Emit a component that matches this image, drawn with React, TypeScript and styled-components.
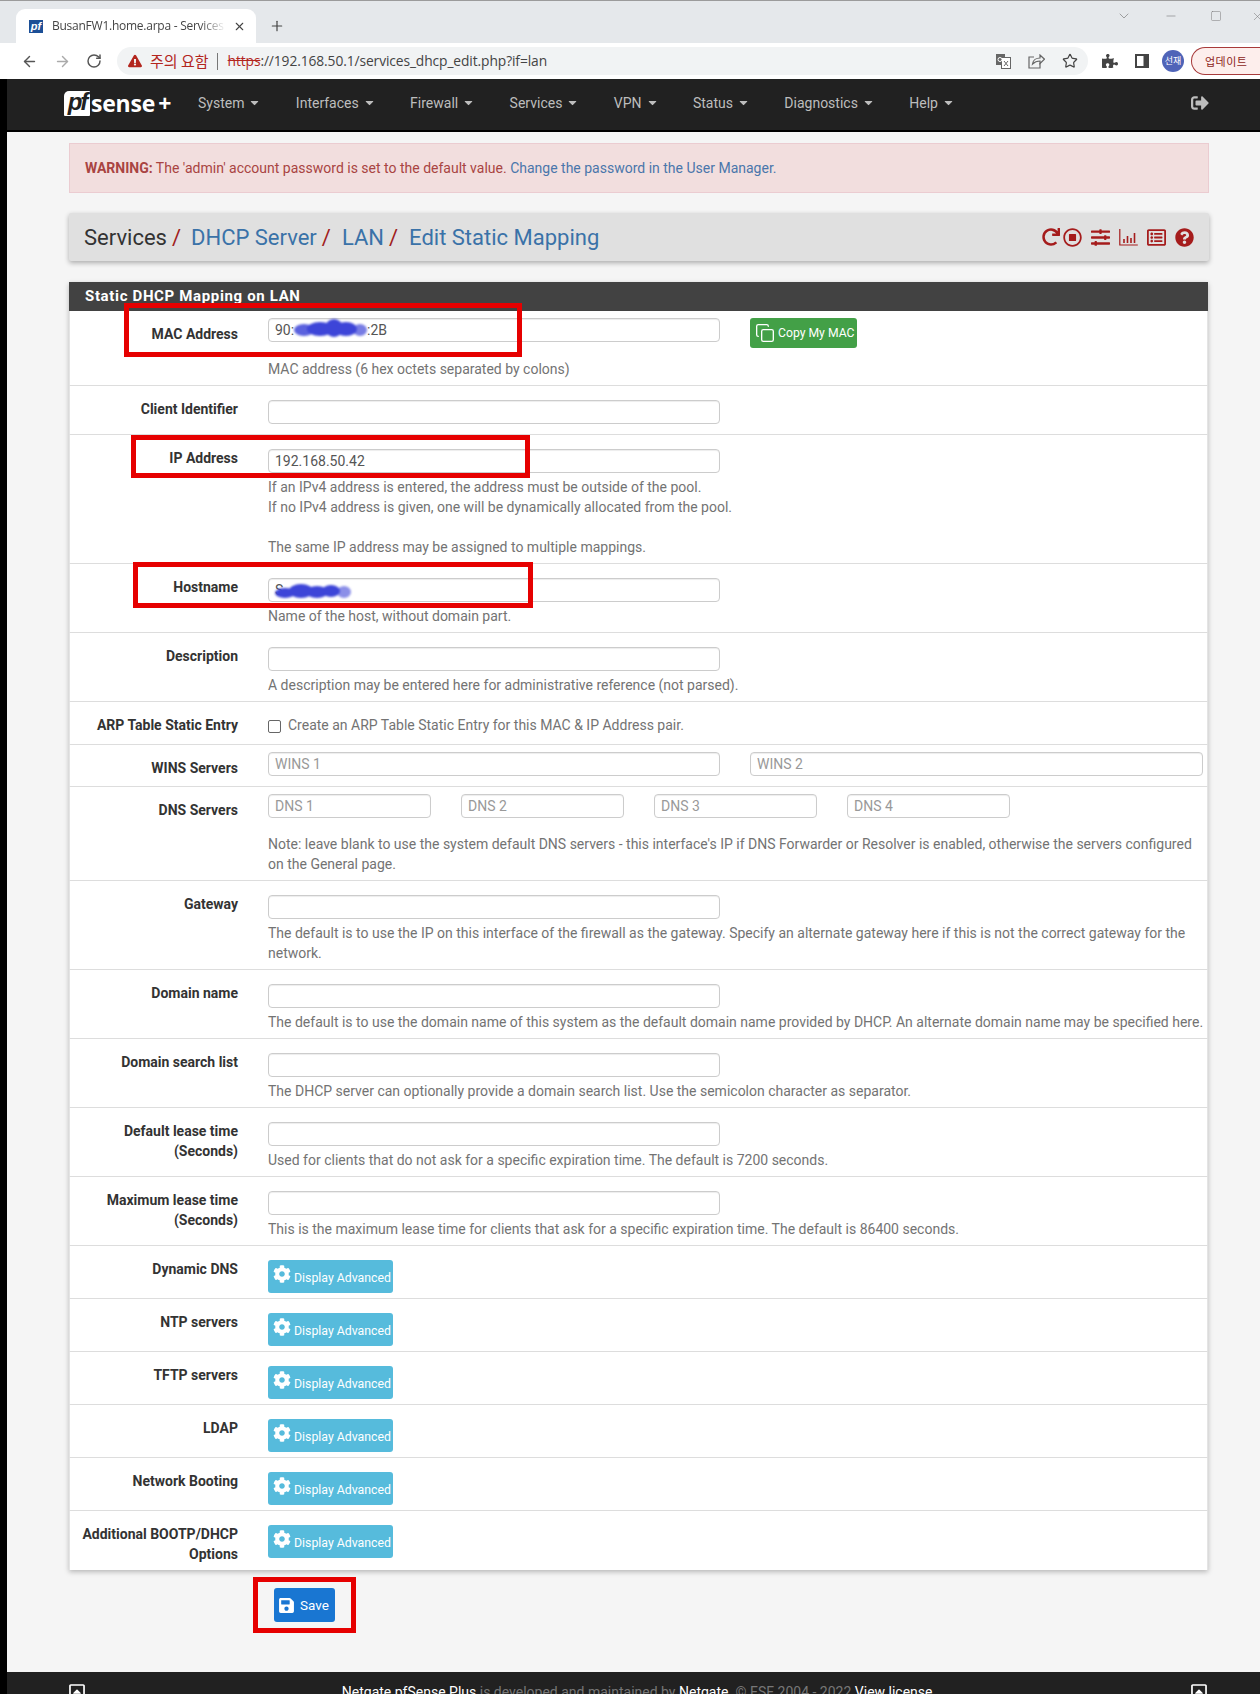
import React from "react";
import styled, { createGlobalStyle } from "styled-components";
import { ArrowLeft, ArrowRight, RotateCw, X, Plus, Star, ChevronDown, Minus, Square, Copy } from "lucide-react";
import {
  FaCaretDown, FaCog, FaExclamationTriangle, FaPuzzlePiece, FaQuestionCircle, FaRedo, FaRegCaretSquareUp,
  FaRegListAlt, FaRegStopCircle, FaSave, FaSignOutAlt, FaSlidersH,
} from "react-icons/fa";

const Global = createGlobalStyle`
  html, body { margin: 0; padding: 0; width: 1260px; height: 1694px; overflow: hidden; background: #f5f5f5; }
  body { font-family: Roboto, "Noto Sans CJK KR", sans-serif; font-size: 14px; line-height: 20px; color: #333; }
  * { box-sizing: border-box; }
`;

const Screen = styled.div`position: relative; display: flex; width: 1260px; height: 1694px; overflow: hidden; background: #f5f5f5;`;
const BlackEdge = styled.div`width: 7px; flex: none; margin-top: 1px; background: #000;`;
const Content = styled.div`flex: 1; min-width: 0; display: flex; flex-direction: column;`;

/* browser chrome */
const TabStrip = styled.div`height: 43px; margin-left: -7px; padding-left: 16px; display: flex; align-items: flex-end; background: #e5e8eb; border-top: 1px solid #9b9b9b; position: relative;`;
const Tab = styled.div`width: 240px; height: 34px; border-radius: 9px 9px 0 0; background: #fff; display: flex; align-items: center; padding-left: 13px; color: #444; font-size: 12px;`;
const Favicon = styled.div`width: 14px; height: 13px; background: #1c4f96; color: #fff; font: italic 700 11px/13px "Liberation Sans", sans-serif; text-align: center; flex: none; margin-right: 9px;`;
const TabTitle = styled.div`width: 174px; white-space: nowrap; font-family: "Open Sans", sans-serif; font-size: 12px; letter-spacing: -0.25px; -webkit-mask-image: linear-gradient(90deg, #000 85%, transparent); mask-image: linear-gradient(90deg, #000 85%, transparent);`;
const TabClose = styled.div`display: flex; margin-left: 7px; color: #444;`;
const NewTab = styled.div`display: flex; margin-left: 13px; padding-bottom: 9px; color: #444;`;
const WindowControls = styled.div`position: absolute; right: -5px; top: 0; height: 30px; display: flex; align-items: center; color: #777;`;
const WinBtn = styled.span<{ $gap: number }>`display: flex; justify-content: center; width: 16px; margin-left: ${(p) => p.$gap}px;`;
const Toolbar = styled.div`height: 36px; margin-left: -7px; background: #fff; display: flex; align-items: center; padding-left: 21px;`;
const NavBtn = styled.span<{ $gap: number; $c?: string }>`display: flex; margin-right: ${(p) => p.$gap}px; color: ${(p) => p.$c || "#555"};`;
const UrlPill = styled.div`width: 971px; height: 28px; border-radius: 14px; background: #f1f3f4; display: flex; align-items: center; padding-left: 11px; flex: none;`;
const Insecure = styled.span`margin-left: 8px; color: #b3261e; font: 15px/20px "Noto Sans CJK KR", sans-serif; white-space: nowrap;`;
const UrlSep = styled.span`width: 1px; height: 17px; background: #777; margin: 0 10px 0 8px;`;
const UrlText = styled.span`font-family: "Open Sans", sans-serif; font-size: 13.8px; letter-spacing: -0.1px; color: #444;`;
const Https = styled.span`color: #b3261e; text-decoration: line-through;`;
const PillIcons = styled.div`margin-left: auto; display: flex; align-items: center; gap: 17px; padding-right: 10px; color: #555;`;
const ToolIcons = styled.div`display: flex; align-items: center; margin-left: 14px; gap: 17px; color: #444;`;
const Avatar = styled.div`width: 22px; height: 22px; border-radius: 50%; background: #4f64b8; color: #fff; font: 9px/22px "Noto Sans CJK KR", sans-serif; text-align: center; margin-left: -4px;`;
const UpdatePill = styled.div`width: 90px; height: 28px; flex: none; margin-left: 7px; border: 1px solid #a83a3a; border-right: none; border-radius: 14px 0 0 14px; background: #fdeeec; color: #8c1d18; font: 11px/26px "Noto Sans CJK KR", sans-serif; padding-left: 13px; letter-spacing: 0.5px;`;

/* navbar */
const Navbar = styled.nav`height: 53px; background: #212121; border-bottom: 2px solid #000; display: flex; align-items: center; padding: 0 51px 4px 57px; flex: none;`;
const Logo = styled.div`display: flex; align-items: center; width: 134px; flex: none; padding-top: 1px;`;
const LogoBox = styled.span`width: 26px; height: 25px; background: #fff; border-radius: 5px 1px 1px 1px; color: #212121; font: italic 700 24px/22px "Liberation Sans", sans-serif; text-align: center; letter-spacing: -2px; flex: none;`;
const LogoWord = styled.span`color: #fff; font: 700 23px/25px "Open Sans", sans-serif; letter-spacing: -0.2px; margin-left: 1px;`;
const LogoPlus = styled.span`color: #fff; font: 700 23px/25px "Open Sans", sans-serif; margin-left: 3px;`;
const NavItem = styled.span`display: flex; align-items: center; color: #bdbdbd; font-size: 14px; margin-right: 34.4px; white-space: nowrap;`;
const Caret = styled.span`display: flex; margin-left: 4px; color: #bdbdbd;`;
const Logout = styled.span`margin-left: auto; display: flex; color: #bdbdbd;`;

/* page */
const Main = styled.main`flex: 1; padding: 11px 51px 0 62px; display: flex; flex-direction: column; min-height: 0;`;
const Alert = styled.div`height: 50px; border: 1px solid #ebccd1; background: #f2dede; color: #a94442; padding: 14px 15px; font-size: 14px;`;
const AlertLink = styled.a`color: #4a76ab;`;
const PageHead = styled.div`height: 48px; margin-top: 20px; background: #e0e0e0; border-radius: 2px; box-shadow: 0 2px 5px rgba(0,0,0,.3); display: flex; align-items: center; padding: 0 15px;`;
const Crumbs = styled.div`display: flex; font-size: 22px; line-height: 30px; color: #333; padding-top: 2px;`;
const Crumb = styled.span`margin-right: 5px; white-space: nowrap;`;
const CrumbLink = styled.a<{ $first?: boolean }>`color: #3a72a8; margin: 0 5px 0 ${(p) => (p.$first ? 10 : 11)}px; white-space: nowrap;`;
const Slash = styled.span`color: #a02020;`;
const HeadIcons = styled.div`margin-left: auto; display: flex; align-items: center; color: #a51c1c;`;
const HeadIcon = styled.span<{ $gap: number }>`display: flex; margin-left: ${(p) => p.$gap}px;`;

const Panel = styled.section`margin-top: 21px; margin-right: 1px; background: #fff; box-shadow: 0 2px 5px rgba(0,0,0,.25); flex: none;`;
const PanelHead = styled.h2`margin: 0; height: 29px; background: #424242; color: #fff; font-size: 15px; font-weight: 700; line-height: 29px; padding-left: 16px; letter-spacing: 0.65px;`;
const Row = styled.div<{ $last?: boolean }>`display: flex; border-left: 1px solid #e4e4e4; border-right: 1px solid #e4e4e4; ${(p) => (p.$last ? "" : "border-bottom: 1px solid #ddd;")}`;
const Label = styled.label`width: 168px; flex: none; text-align: right; font-weight: 700; color: #333; padding-top: 13px; padding-left: 6px; font-size: 14px;`;
const Control = styled.div<{ $top?: number; $bottom?: number }>`flex: 1; min-width: 0; margin-left: 30px; padding-top: ${(p) => p.$top ?? 14}px; padding-bottom: ${(p) => p.$bottom ?? 6}px; position: relative;`;
const Line = styled.div<{ $gap: number }>`display: flex; gap: ${(p) => p.$gap}px; align-items: flex-start;`;
const TextInput = styled.input<{ $w?: number }>`
  display: block; width: ${(p) => p.$w ?? 452}px; flex: none; height: 24px; padding: 0 6px; border: 1px solid #ccc; border-radius: 4px; background: #fff;
  box-shadow: inset 0 1px 1px rgba(0,0,0,.075); font: 14px Roboto, sans-serif; color: #555; outline: none;
  &::placeholder { color: #999; opacity: 1; }
`;
const Help = styled.div<{ $gap?: number }>`margin-top: ${(p) => p.$gap ?? 4}px; color: #737373; font-size: 14px; line-height: 20px; width: 937px;`;
const Smear = styled.svg<{ $x: number; $y: number }>`position: absolute; left: ${(p) => p.$x}px; top: ${(p) => p.$y}px; overflow: visible; filter: blur(1px);`;
const CopyBtn = styled.button`height: 30px; width: 107px; display: flex; align-items: center; padding: 0 0 0 5px; border: 0; border-radius: 3px; background: #43a047; color: #fff; font: 12.2px Roboto, sans-serif; gap: 3px;`;
const CheckLine = styled.div`display: flex; align-items: center; height: 20px; color: #737373;`;
const Check = styled.input`appearance: none; width: 13px; height: 13px; margin: 2px 7px 0 0; border: 1px solid #666; border-radius: 2px; background: #fff;`;
const AdvBtn = styled.button`height: 33px; width: 125px; display: flex; align-items: center; padding: 0 0 0 5px; gap: 3px; border: 0; border-radius: 3px; background: #56bbdc; color: #fff; font: 12.3px Roboto, sans-serif;`;
const AdvIcon = styled.span`display: flex; margin-top: -5px;`;
const AdvText = styled.span`margin-top: 3px;`;
const SaveRow = styled.div`margin-top: 18px; padding-left: 205px; flex: none;`;
const SaveBtn = styled.button`height: 34px; width: 61px; display: flex; align-items: center; gap: 5px; padding: 0 0 0 4px; border: 0; border-radius: 3px; background: #1976d2; color: #fff; font: 13.5px Roboto, sans-serif;`;

/* footer */
const Footer = styled.footer`position: absolute; left: 7px; right: 0; top: 1672px; height: 40px; background: #212121; color: #777; display: flex; padding: 10px 52px 0 61px;`;
const FootIcon = styled.span`display: flex; color: #fff; margin-top: 1px;`;
const FootText = styled.div`flex: 1; text-align: center; font-size: 14px; padding-left: 2px;`;
const FootLink = styled.span`color: #fff;`;

/* annotations laid over the shot */
const RedBox = styled.div<{ $x: number; $y: number; $w: number; $h: number }>`
  position: absolute; left: ${(p) => p.$x}px; top: ${(p) => p.$y}px; width: ${(p) => p.$w}px; height: ${(p) => p.$h}px;
  border: 5px solid #e60000; pointer-events: none;
`;

const BarChart = () => (
  <svg width="19" height="17" viewBox="0 0 19 17" fill="none" stroke="currentColor" strokeWidth="1.2">
    <path d="M.8 0v16h18" />
    <path d="M5 14v-4M8.5 14V7M12 14V9M15.5 14V4" strokeWidth="1.6" />
  </svg>
);
const Translate = () => (
  <svg width="15" height="15" viewBox="0 0 15 15">
    <rect x="0" y="0" width="9" height="11" fill="#666" />
    <rect x="5.5" y="3.5" width="9" height="11" fill="#fff" stroke="#666" />
    <circle cx="4" cy="5.5" r="2" fill="none" stroke="#fff" />
    <path d="M8 7l4 5M12 7l-4 5" stroke="#666" />
  </svg>
);
const ShareIcon = () => (
  <svg width="17" height="15" viewBox="0 0 17 15" fill="none" stroke="#666" strokeWidth="1.2">
    <path d="M6 3H1v11h11V9" />
    <path d="M4.5 10c.5-4 4-6 7.5-6V1l4.5 4.2L12 9.5V7c-3 0-5.500 1-7.500 3z" />
  </svg>
);
const PanelIcon = () => (
  <svg width="14" height="14" viewBox="0 0 14 14">
    <rect x="1" y="1" width="12" height="12" fill="#fff" stroke="#444" strokeWidth="2" />
    <rect x="8.500" y="1" width="4.500" height="12" fill="#444" />
  </svg>
);
const MacSmear = () => (
  <Smear $x={26} $y={8} width="74" height="19" viewBox="0 0 74 19" fill="#3d45d8">
    <ellipse cx="10" cy="11" rx="10" ry="6" opacity=".85" />
    <ellipse cx="26" cy="10" rx="13" ry="7" />
    <ellipse cx="40" cy="9" rx="9" ry="9" />
    <ellipse cx="52" cy="10" rx="11" ry="7" />
    <ellipse cx="66" cy="11" rx="7" ry="6" opacity=".7" />
  </Smear>
);
const HostSmear = () => (
  <Smear $x={7} $y={19} width="78" height="17" viewBox="0 0 78 17" fill="#3d45d8">
    <ellipse cx="10" cy="10" rx="10" ry="5" />
    <ellipse cx="26" cy="8" rx="12" ry="7" />
    <ellipse cx="42" cy="9" rx="11" ry="6" />
    <ellipse cx="56" cy="8" rx="9" ry="6" />
    <ellipse cx="69" cy="9" rx="7" ry="6" opacity=".6" />
  </Smear>
);

const Adv = () => (
  <AdvBtn>
    <AdvIcon><FaCog size={18} /></AdvIcon>
    <AdvText>Display Advanced</AdvText>
  </AdvBtn>
);

const navItems = ["System", "Interfaces", "Firewall", "Services", "VPN", "Status", "Diagnostics", "Help"];
const advRows = ["Dynamic DNS", "NTP servers", "TFTP servers", "LDAP", "Network Booting"];

export default function App() {
  return (
    <Screen>
      <Global />
      <BlackEdge />
      <Content>
        <TabStrip>
          <Tab>
            <Favicon>pf</Favicon>
            <TabTitle>BusanFW1.home.arpa - Services</TabTitle>
            <TabClose><X size={13} strokeWidth={2} /></TabClose>
          </Tab>
          <NewTab><Plus size={16} strokeWidth={1.8} /></NewTab>
          <WindowControls>
            <WinBtn $gap={0}><ChevronDown size={16} strokeWidth={1} /></WinBtn>
            <WinBtn $gap={31}><Minus size={14} strokeWidth={1} /></WinBtn>
            <WinBtn $gap={29}><Square size={12} strokeWidth={1} /></WinBtn>
            <WinBtn $gap={25}><X size={13} strokeWidth={1} /></WinBtn>
          </WindowControls>
        </TabStrip>
        <Toolbar>
          <NavBtn $gap={16}><ArrowLeft size={17} /></NavBtn>
          <NavBtn $gap={15} $c="#aaa"><ArrowRight size={17} /></NavBtn>
          <NavBtn $gap={15}><RotateCw size={16} strokeWidth={2.2} /></NavBtn>
          <UrlPill>
            <FaExclamationTriangle size={14} color="#b3261e" />
            <Insecure>주의 요함</Insecure>
            <UrlSep />
            <UrlText><Https>https</Https>://192.168.50.1/services_dhcp_edit.php?if=lan</UrlText>
            <PillIcons>
              <Translate />
              <ShareIcon />
              <Star size={16} strokeWidth={1.8} color="#444" />
            </PillIcons>
          </UrlPill>
          <ToolIcons>
            <FaPuzzlePiece size={16} />
            <PanelIcon />
            <Avatar>선재</Avatar>
          </ToolIcons>
          <UpdatePill>업데이트</UpdatePill>
        </Toolbar>
        <Navbar>
          <Logo>
            <LogoBox>pf</LogoBox>
            <LogoWord>sense</LogoWord>
            <LogoPlus>+</LogoPlus>
          </Logo>
          {navItems.map((n) => (
            <NavItem key={n}>
              {n}
              <Caret><FaCaretDown size={13} /></Caret>
            </NavItem>
          ))}
          <Logout><FaSignOutAlt size={18} /></Logout>
        </Navbar>
        <Main>
          <Alert>
            <strong>WARNING:</strong> The 'admin' account password is set to the default value.{" "}
            <AlertLink>Change the password in the User Manager.</AlertLink>
          </Alert>
          <PageHead>
            <Crumbs>
              <Crumb>Services</Crumb><Slash>/</Slash>
              <CrumbLink $first>DHCP Server</CrumbLink><Slash>/</Slash>
              <CrumbLink>LAN</CrumbLink><Slash>/</Slash>
              <CrumbLink>Edit Static Mapping</CrumbLink>
            </Crumbs>
            <HeadIcons>
              <HeadIcon $gap={0}><FaRedo size={18} /></HeadIcon>
              <HeadIcon $gap={3}><FaRegStopCircle size={19} /></HeadIcon>
              <HeadIcon $gap={9}><FaSlidersH size={19} /></HeadIcon>
              <HeadIcon $gap={9}><BarChart /></HeadIcon>
              <HeadIcon $gap={9}><FaRegListAlt size={19} /></HeadIcon>
              <HeadIcon $gap={9}><FaQuestionCircle size={19} /></HeadIcon>
            </HeadIcons>
          </PageHead>
          <Panel>
            <PanelHead>Static DHCP Mapping on LAN</PanelHead>
            <Row>
              <Label>MAC Address</Label>
              <Control $top={7}>
                <Line $gap={30}>
                  <TextInput readOnly value="90:                     :2B" />
                  <CopyBtn><Copy size={20} strokeWidth={1.6} />Copy My MAC</CopyBtn>
                </Line>
                <MacSmear />
                <Help $gap={11}>MAC address (6 hex octets separated by colons)</Help>
              </Control>
            </Row>
            <Row>
              <Label>Client Identifier</Label>
              <Control $bottom={10}><TextInput readOnly /></Control>
            </Row>
            <Row>
              <Label>IP Address</Label>
              <Control>
                <TextInput readOnly value="192.168.50.42" />
                <Help>
                  If an IPv4 address is entered, the address must be outside of the pool.<br />
                  If no IPv4 address is given, one will be dynamically allocated from the pool.<br /><br />
                  The same IP address may be assigned to multiple mappings.
                </Help>
              </Control>
            </Row>
            <Row>
              <Label>Hostname</Label>
              <Control>
                <TextInput readOnly value="S" />
                <HostSmear />
                <Help>Name of the host, without domain part.</Help>
              </Control>
            </Row>
            <Row>
              <Label>Description</Label>
              <Control>
                <TextInput readOnly />
                <Help>A description may be entered here for administrative reference (not parsed).</Help>
              </Control>
            </Row>
            <Row>
              <Label>ARP Table Static Entry</Label>
              <Control $top={13} $bottom={9}>
                <CheckLine>
                  <Check type="checkbox" readOnly />
                  Create an ARP Table Static Entry for this MAC &amp; IP Address pair.
                </CheckLine>
              </Control>
            </Row>
            <Row>
              <Label>WINS Servers</Label>
              <Control $top={7} $bottom={10}>
                <Line $gap={30}>
                  <TextInput readOnly placeholder="WINS 1" />
                  <TextInput readOnly placeholder="WINS 2" $w={453} />
                </Line>
              </Control>
            </Row>
            <Row>
              <Label>DNS Servers</Label>
              <Control $top={7}>
                <Line $gap={30}>
                  <TextInput readOnly placeholder="DNS 1" $w={163} />
                  <TextInput readOnly placeholder="DNS 2" $w={163} />
                  <TextInput readOnly placeholder="DNS 3" $w={163} />
                  <TextInput readOnly placeholder="DNS 4" $w={163} />
                </Line>
                <Help $gap={16}>
                  Note: leave blank to use the system default DNS servers - this interface's IP if DNS Forwarder or Resolver is enabled, otherwise the servers configured on the General page.
                </Help>
              </Control>
            </Row>
            <Row>
              <Label>Gateway</Label>
              <Control>
                <TextInput readOnly />
                <Help>The default is to use the IP on this interface of the firewall as the gateway. Specify an alternate gateway here if this is not the correct gateway for the network.</Help>
              </Control>
            </Row>
            <Row>
              <Label>Domain name</Label>
              <Control>
                <TextInput readOnly />
                <Help>The default is to use the domain name of this system as the default domain name provided by DHCP. An alternate domain name may be specified here.</Help>
              </Control>
            </Row>
            <Row>
              <Label>Domain search list</Label>
              <Control>
                <TextInput readOnly />
                <Help>The DHCP server can optionally provide a domain search list. Use the semicolon character as separator.</Help>
              </Control>
            </Row>
            <Row>
              <Label>Default lease time (Seconds)</Label>
              <Control>
                <TextInput readOnly />
                <Help>Used for clients that do not ask for a specific expiration time. The default is 7200 seconds.</Help>
              </Control>
            </Row>
            <Row>
              <Label>Maximum lease time (Seconds)</Label>
              <Control>
                <TextInput readOnly />
                <Help>This is the maximum lease time for clients that ask for a specific expiration time. The default is 86400 seconds.</Help>
              </Control>
            </Row>
            {advRows.map((r) => (
              <Row key={r}>
                <Label>{r}</Label>
                <Control $top={14} $bottom={5}><Adv /></Control>
              </Row>
            ))}
            <Row $last>
              <Label>Additional BOOTP/DHCP Options</Label>
              <Control $top={14} $bottom={12}><Adv /></Control>
            </Row>
          </Panel>
          <SaveRow>
            <SaveBtn><FaSave size={17} />Save</SaveBtn>
          </SaveRow>
        </Main>
      </Content>
      <Footer>
        <FootIcon><FaRegCaretSquareUp size={18} /></FootIcon>
        <FootText>
          <FootLink>Netgate pfSense Plus</FootLink> is developed and maintained by <FootLink>Netgate</FootLink>. © ESF 2004 - 2022 <FootLink>View license.</FootLink>
        </FootText>
        <FootIcon><FaRegCaretSquareUp size={18} /></FootIcon>
      </Footer>
      <RedBox $x={124} $y={303} $w={398} $h={54} />
      <RedBox $x={131} $y={435} $w={399} $h={43} />
      <RedBox $x={133} $y={562} $w={400} $h={46} />
      <RedBox $x={253} $y={1577} $w={103} $h={56} />
    </Screen>
  );
}
